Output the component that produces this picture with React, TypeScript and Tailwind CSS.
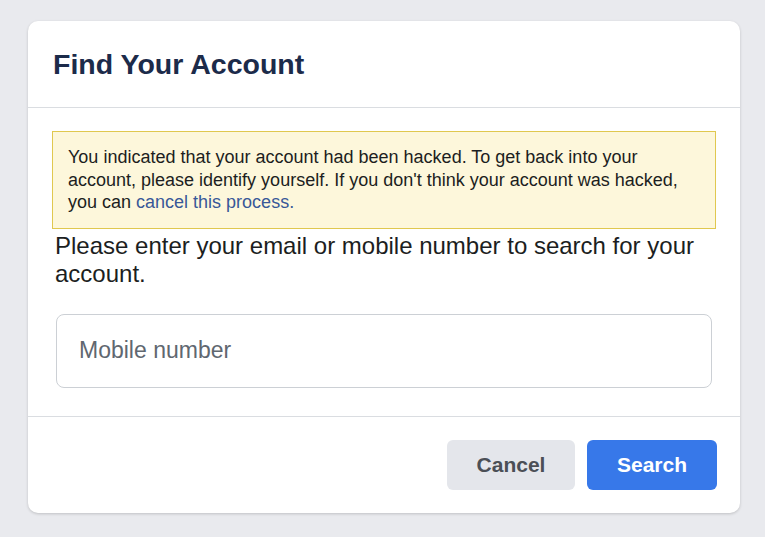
export default function App() {
  return (
    <div
      className="min-h-[537px] w-full bg-[#e9eaee] pt-[21px] pl-[28px]"
      style={{ fontFamily: '"Liberation Sans", Arial, sans-serif' }}
    >
      <div className="w-[712px] rounded-[10px] bg-white shadow-[0_1px_3px_rgba(0,0,0,0.18)]">
        <div className="flex h-[86px] items-center px-[25px]">
          <h1 className="text-[28.5px] font-bold leading-[32px] text-[#1c2b4a]">Find Your Account</h1>
        </div>
        <div className="border-t border-[#dadde1] px-6 pb-[28px] pt-[23px]">
          <div className="border border-[#e0c84f] bg-[#fdf7db] pb-[14px] pl-[15px] pr-3 pt-[14px] text-[18px] leading-[22.5px] text-[#1c1e21]">
            You indicated that your account had been hacked. To get back into your account, please
            identify yourself. If you don't think your account was hacked, you can{" "}
            <a className="text-[#385898]">cancel this process.</a>
          </div>
          <p className="ml-[3px] mt-[3px] text-[24px] leading-[28px] text-[#1c1e21]">
            Please enter your email or mobile number to search for your account.
          </p>
          <input
            type="text"
            placeholder="Mobile number"
            className="mx-[4px] mt-[26px] block h-[74px] w-[656px] rounded-[8px] border border-[#ccd0d5] px-[22px] text-[23px] text-[#1c1e21] outline-none placeholder:text-[#606770]"
          />
        </div>
        <div className="flex justify-end gap-3 border-t border-[#dadde1] px-[23px] pb-[23px] pt-[23px]">
          <button className="h-[50px] w-[128px] rounded-[6px] bg-[#e4e6eb] text-[21px] font-bold text-[#4b4f56]">
            Cancel
          </button>
          <button className="h-[50px] w-[130px] rounded-[6px] bg-[#3778e9] text-[21px] font-bold text-white">
            Search
          </button>
        </div>
      </div>
    </div>
  );
}
